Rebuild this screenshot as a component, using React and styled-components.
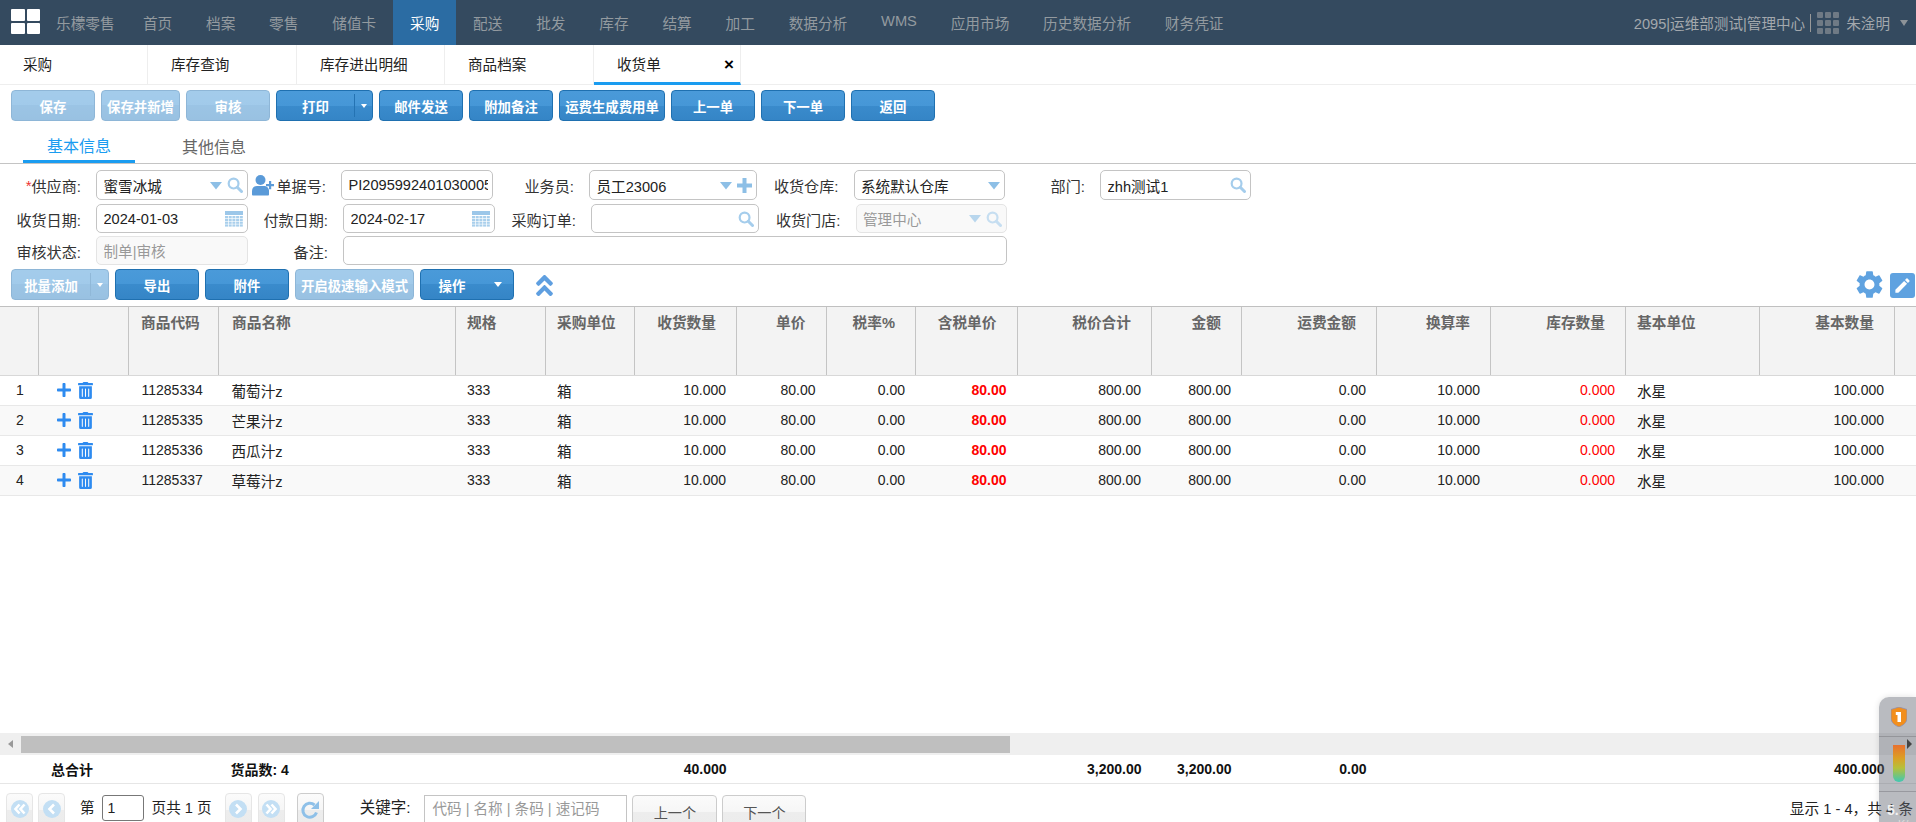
import React from "react";
import styled, { createGlobalStyle } from "styled-components";
import { FaPlus, FaTrashAlt, FaAngleDoubleUp } from "react-icons/fa";
import { MdSettings, MdEdit } from "react-icons/md";

const Global = createGlobalStyle`
  html, body { margin: 0; padding: 0; background: #fff; }
  body { font-family: "Liberation Sans", "Noto Sans CJK SC", sans-serif; color: #222; }
  * { box-sizing: border-box; }
`;

const Page = styled.div`
  position: relative; width: 1916px; height: 822px; overflow: hidden;
  display: flex; flex-direction: column; font-size: 14.6px;
`;
const Nav = styled.header`
  height: 45px; flex: none; background: #344a5f; display: flex; align-items: stretch;
  padding-left: 11px; color: #939a9f; font-size: 14.67px;
`;
const Logo = styled.div`
  width: 29px; height: 25px; margin-top: 9px; display: grid; grid-template-columns: 1fr 1fr;
  grid-template-rows: 1fr 1fr; gap: 2px; flex: none;
  span { background: #fff; border-radius: 1px; }
`;
const Brand = styled.div`
  margin-left: 16px; width: 70px; display: flex; align-items: center; white-space: nowrap;
`;
const NavItem = styled.div`
  display: flex; align-items: center; padding: 0 16.9px; white-space: nowrap;
  background: ${p => (p.$active ? "#2b6ca3" : "transparent")};
  color: ${p => (p.$active ? "#fff" : "#939a9f")};
  transform: ${p => (p.$latin ? "translateY(-2px)" : "none")};
`;
const NavRight = styled.div`
  margin-left: auto; display: flex; align-items: center; color: #a3a8ad; white-space: nowrap; padding-right: 8px; font-size: 14.6px;
`;
const NavSep = styled.i`
  width: 1px; height: 18px; background: #999; margin: 0 6px 0 5px;
`;
const Dots = styled.div`
  display: grid; grid-template-columns: repeat(3, 6px); grid-auto-rows: 6px; gap: 2px; margin-right: 7px;
  span { background: #6f7a85; border-radius: 1px; }
`;
const NavCaret = styled.i`
  width: 0; height: 0; margin-left: 10px; border: 4px solid transparent; border-top: 6px solid #8d9398; border-bottom: 0;
`;
const Tabs = styled.div`
  height: 40px; flex: none; display: flex; border-bottom: 1px solid #eee; color: #222;
`;
const Tab = styled.div`
  width: ${p => p.$w}px; display: flex; align-items: center; padding-left: 23px; padding-right: 6px; border-right: 1px solid #eee;
  justify-content: space-between; padding-bottom: 2px;
  ${p => p.$active && "border-bottom: 3px solid #1a9cf0; margin-bottom: -1px; padding-top: 1px;"}
`;
const Close = styled.span`
  font-size: 17px; font-weight: bold; color: #000; line-height: 1; padding-top: 3px;
`;
const Toolbar = styled.div`
  display: flex; gap: 6px; padding: 5px 0 0 11px; flex: none;
`;
const Btn = styled.div`
  height: 31px; width: ${p => p.$w}px; flex: none; border: 1px solid #1f70b0; border-radius: 4px;
  background: linear-gradient(#4a9ad9 0, #4697d7 50%, #3a8bcc 50%, #3585c6 100%);
  color: #fff; font-weight: bold; font-size: 13.4px; display: flex; align-items: center; justify-content: center;
  white-space: nowrap; overflow: hidden;
  opacity: ${p => (p.$off ? 0.5 : 1)};
`;
const BtnMain = styled.span`
  flex: 1; text-align: center;
`;
const BtnSide = styled.span`
  width: ${p => p.$w || 18}px; height: 100%; flex: none; display: flex; align-items: center; justify-content: center;
  ${p => p.$line && "border-left: 1px solid #2473b3; height: 80%;"}
`;
const WhiteCaret = styled.i`
  width: 0; height: 0; border: ${p => p.$s || 3}px solid transparent; border-top: ${p => (p.$s || 3) + 1}px solid #fff; border-bottom: 0;
`;
const SubTabs = styled.div`
  height: 43px; flex: none; display: flex; padding-left: 23px; gap: 23px; border-bottom: 1px solid #c4c4c4;
`;
const SubTab = styled.div`
  width: 112px; height: 42px; padding-top: 8px; display: flex; align-items: center; justify-content: center; font-size: 16px;
  color: ${p => (p.$active ? "#1a9cf0" : "#666")};
  border-bottom: ${p => (p.$active ? "3px solid #1a9cf0" : "0")};
`;
const Form = styled.div`
  padding-top: 6px; display: flex; flex-direction: column; flex: none;
`;
const FormRow = styled.div`
  display: flex; height: ${p => p.$h}px; margin-bottom: ${p => p.$mb}px;
`;
const Label = styled.label`
  width: ${p => p.$w}px; flex: none; padding-right: 15px; display: flex; align-items: center; justify-content: flex-end;
  white-space: nowrap; color: #333; font-size: 15.1px;
  em { color: #e33; font-style: normal; }
`;
const Field = styled.div`
  width: ${p => p.$w}px; flex: none; height: 100%; display: flex; align-items: center; gap: 5px;
  padding: 0 4px 0 6.5px; border-radius: 5px;
  border: 1px solid ${p => (p.$off ? "#e4e4e4" : "#c4c4c4")};
  background: ${p => (p.$off ? "#f9f9f9" : "#fff")};
  color: ${p => (p.$off ? "#999" : "#222")};
`;
const FieldText = styled.span`
  flex: 1; min-width: 0; overflow: hidden; white-space: nowrap;
`;
const IconBox = styled.span`
  display: inline-flex; flex: none; opacity: ${p => (p.$off ? 0.6 : 1)};
`;
const PersonBox = styled(IconBox)`
  margin-right: 3px;
`;
const ActionRow = styled.div`
  display: flex; align-items: flex-start; gap: 6px; padding-left: 11px; margin: 4px 0 6px; height: 31px; flex: none;
`;
const Chevrons = styled.span`
  margin-left: 11px; margin-top: 3px; color: #5f9fe0; font-size: 27px; line-height: 0; display: inline-flex;
`;
const Tools = styled.div`
  margin-left: auto; display: flex; align-items: center; gap: 4px; margin-right: 1px; height: 100%;
`;
const Edit = styled.span`
  width: 25px; height: 25px; border-radius: 3px; background: #5fa2e0; color: #fff; display: flex;
  align-items: center; justify-content: center; font-size: 19px; margin-top: 2px;
`;
const cols = "39px 89.5px 90px 237.5px 90px 89px 102px 89.5px 89.5px 101.5px 134.5px 90px 135px 114px 135px 134px 135px 21px";
const Head = styled.div`
  display: grid; grid-template-columns: ${cols}; height: 70px; flex: none; background: #f3f3f3;
  border-top: 1px solid #c0c0c0; border-bottom: 1px solid #d8d8d8;
`;
const HeadCell = styled.div`
  border-right: 1px solid #c4c4c4; padding: 7px ${p => (p.$r ? "20px" : "0")} 0 ${p => (p.$r ? "0" : p.$pl || 11)}px;
  text-align: ${p => (p.$r ? "right" : "left")}; color: #666; font-weight: bold; font-size: 14.7px;
  white-space: nowrap; line-height: 18px;
  &:last-child { border-right: 0; }
`;
const Body = styled.div`
  flex: 1; min-height: 0;
`;
const Row = styled.div`
  display: grid; grid-template-columns: ${cols}; height: 30px; border-bottom: 1px solid #e8e8e8;
  background: ${p => (p.$alt ? "#f9f9f9" : "#fff")};
`;
const Cell = styled.div`
  display: flex; align-items: center; white-space: nowrap; font-size: ${p => (p.$cjk ? "14.6px" : "14px")};
  justify-content: ${p => (p.$r ? "flex-end" : "flex-start")};
  padding: ${p => (p.$r ? "0 11px 1px 0" : `0 0 1px ${p.$pl || 11}px`)};
  color: ${p => p.$color || "#222"}; font-weight: ${p => (p.$bold ? "bold" : "normal")};
`;
const IndexCell = styled(Cell)`padding-left: 16px;`;
const OpCell = styled(Cell)`
  padding-left: 17px; gap: 5px; color: #2e8bf0;
`;
const Scroll = styled.div`
  height: 22px; flex: none; background: #efefef; display: flex; align-items: center; position: relative;
`;
const ScrollArrow = styled.i`
  width: 21px; display: flex; justify-content: center; flex: none;
  &::before { content: ""; border: 4px solid transparent; border-right: 5px solid #999; border-left: 0; }
`;
const Thumb = styled.div`
  width: 988.5px; height: 17px; background: #bfbfbf;
`;
const Total = styled.div`
  display: grid; grid-template-columns: ${cols}; height: 29px; flex: none; border-bottom: 1px solid #e6e6e6;
`;
const TotalCell = styled(Cell)`
  font-weight: bold; color: #111; overflow: visible;
  padding: ${p => (p.$r ? "0 10.5px 1px 0" : "0 0 1px 12px")};
`;
const Pager = styled.div`
  display: flex; align-items: flex-start; padding: 9px 3px 0 6px; flex: none; height: 38px; font-size: 14.6px; color: #222;
`;
const PageBtn = styled.div`
  width: ${p => p.$w || 27}px; height: 34px; margin-left: ${p => p.$ml || 0}px; margin-top: ${p => p.$mt || 0}px; flex: none;
  border: 1px solid #e6e6e6; border-radius: 4px;
  background: linear-gradient(#fbfbfb 0, #f6f6f6 50%, #ededed 50%, #ececec 100%); display: flex; align-items: flex-start;
  justify-content: center; padding-top: 6px; color: #555; font-size: 14.2px;
  ${p => p.$strong && "border-color: #ccc;"}
`;
const PagerText = styled.span`
  margin-left: ${p => p.$ml}px; line-height: 20px; padding-top: 5px; white-space: nowrap; font-size: ${p => p.$fs || 14.6}px;
`;
const PageNo = styled.div`
  width: 42px; height: 26px; margin-left: 7px; margin-top: 2px; flex: none; border: 1px solid #777; border-radius: 3px;
  padding: 2px 0 0 5px; line-height: 20px; font-size: 14px;
`;
const KeywordBox = styled.div`
  width: 203px; height: 30px; margin-left: 14px; margin-top: 2px; flex: none; border: 1px solid #c4c4c4;
  padding: 3px 0 0 7px; line-height: 20px; white-space: nowrap; color: #999;
`;
const PageInfo = styled.span`
  margin-left: auto; line-height: 20px; padding-top: 6px; white-space: nowrap; font-size: 14.7px;
`;
const Widget = styled.aside`
  position: absolute; left: 1879px; top: 697px; right: 0; bottom: 0; border-radius: 10px 0 0 0;
  background: rgba(100, 105, 115, 0.45); box-shadow: 0 0 6px rgba(0,0,0,.12);
  display: flex; flex-direction: column; align-items: flex-start;
`;
const ShieldSlot = styled.div`
  height: 40px; width: 100%; padding: 10px 0 0 12px; border-bottom: 1px solid rgba(120,120,125,.5); flex: none;
`;
const ThermoSlot = styled.div`
  position: relative; height: 55px; width: 100%; padding: 8px 0 0 14px; border-bottom: 1px solid rgba(120,120,125,.5); flex: none;
`;
const Thermo = styled.div`
  width: 12px; height: 37px; border-radius: 0 0 6px 6px;
  background: linear-gradient(#e8702f 0, #dc9f25 35%, #b6c03a 62%, #3ec8b4 100%);
`;
const ThermoArrow = styled.i`
  position: absolute; left: 28px; top: 2px; width: 0; height: 0; border: 5px solid transparent; border-left: 5px solid #444; border-right: 0;
`;
const Speed = styled.div`
  color: #f1f1f1; font-size: 14px; padding: 11px 0 0 8px; line-height: 15px; font-weight: bold; white-space: nowrap;
  small { display: block; font-size: 11px; font-weight: normal; color: #ddd; line-height: 12px; }
  small::before { content: "▲"; color: #2a8ee8; font-size: 8px; margin-right: 3px; }
`;

const CaretIcon = ({ c = "#8dbfe6" }) => (
  <svg width="12" height="9" viewBox="0 0 12 9"><path d="M0 1h12L6 8.500z" fill={c} /></svg>
);
const SearchIcon = ({ c = "#a5cdec" }) => (
  <svg width="16" height="16" viewBox="0 0 16 16" fill="none">
    <circle cx="6.600" cy="6.600" r="4.900" stroke={c} strokeWidth="2.200" />
    <path d="M10.300 10.300l4.200 4.200" stroke={c} strokeWidth="3" strokeLinecap="round" />
  </svg>
);
const PlusIcon = () => (
  <svg width="15" height="15" viewBox="0 0 15 15"><path d="M5.500 0h4v5.500H15v4H9.500V15h-4V9.500H0v-4h5.500z" fill="#8dbfe6" /></svg>
);
const CalIcon = () => (
  <svg width="18" height="16" viewBox="0 0 18 16">
    <rect width="18" height="4" fill="#9cc7e9" />
    {[0, 1, 2, 3].map(r => [0, 1, 2, 3, 4].map(c => (
      <rect key={r + "-" + c} x={c * 3.7} y={5 + r * 2.8} width="3" height="2.200" fill="#a9cfec" />
    )))}
  </svg>
);
const AddUser = () => (
  <svg width="22" height="22" viewBox="0 0 22 22" fill="#5a9ad8">
    <circle cx="8.500" cy="6" r="5" />
    <path d="M0 20.500v-3.500c0-3.500 2.500-5 5-5h7c2.500 0 5 1.500 5 5v3.500c0 .5-.5 1-1 1H1c-.5 0-1-.5-1-1z" />
    <path d="M17 7h2.200v3H22v2.200h-2.800v3H17v-3h-3V10h3z" />
  </svg>
);
const Cal = () => <IconBox><CalIcon /></IconBox>;
const Cue = ({ dir, dbl }) => {
  const pts = dir === "l"
    ? (dbl ? ["M8.500 4.500L4.500 9l4 4.500", "M13.500 4.500L9.500 9l4 4.500"] : ["M11 4.500L6.500 9l4.500 4.500"])
    : (dbl ? ["M4.500 4.500L8.500 9l-4 4.500", "M9.500 4.500L13.500 9l-4 4.500"] : ["M7 4.500L11.500 9 7 13.500"]);
  return (
    <svg width="18" height="18" viewBox="0 0 18 18">
      <circle cx="9" cy="9" r="9" fill="#c3dff4" />
      {pts.map(d => <path key={d} d={d} fill="none" stroke="#fff" strokeWidth="2.600" />)}
    </svg>
  );
};
const Refresh = () => (
  <svg width="20" height="20" viewBox="0 0 20 20" fill="none">
    <path d="M16.500 12.500A7 7 0 1 1 14.500 5" stroke="#8ec0e8" strokeWidth="3" />
    <path d="M19 1v8h-8z" fill="#8ec0e8" />
  </svg>
);
const Shield = () => (
  <svg width="16" height="20" viewBox="0 0 16 20">
    <path d="M8 0l8 2.500V11c0 4.500-4 7.500-8 9-4-1.500-8-4.500-8-9V2.500z" fill="#f28f1d" stroke="#8f8fb0" strokeWidth=".8" />
    <rect x="6.500" y="5" width="3.500" height="10" fill="#fff" />
    <path d="M4.800 5h3v3h-3z" fill="#fff" />
  </svg>
);

const navItems = ["首页", "档案", "零售", "储值卡", "采购", "配送", "批发", "库存", "结算", "加工", "数据分析", "WMS", "应用市场", "历史数据分析", "财务凭证"];
const heads = [
  ["", 0], ["", 0], ["商品代码", 0, 12.5], ["商品名称", 0, 13.5], ["规格", 0], ["采购单位", 0], ["收货数量", 1], ["单价", 1], ["税率%", 1], ["含税单价", 1],
  ["税价合计", 1], ["金额", 1], ["运费金额", 1], ["换算率", 1], ["库存数量", 1], ["基本单位", 0], ["基本数量", 1], ["", 0],
];
const rows = [
  ["11285334", "葡萄汁z"],
  ["11285335", "芒果汁z"],
  ["11285336", "西瓜汁z"],
  ["11285337", "草莓汁z"],
];

export default function App() {
  return (
    <Page>
      <Global />
      <Nav>
        <Logo><span /><span /><span /><span /></Logo>
        <Brand>乐檬零售</Brand>
        {navItems.map(n => <NavItem key={n} $active={n === "采购"} $latin={n === "WMS"}>{n}</NavItem>)}
        <NavRight>
          2095|运维部测试|管理中心<NavSep />
          <Dots>{Array.from({ length: 9 }, (_, i) => <span key={i} />)}</Dots>
          朱淦明<NavCaret />
        </NavRight>
      </Nav>
      <Tabs>
        <Tab $w={148}>采购</Tab>
        <Tab $w={149}>库存查询</Tab>
        <Tab $w={148}>库存进出明细</Tab>
        <Tab $w={149}>商品档案</Tab>
        <Tab $w={147} $active>收货单<Close>×</Close></Tab>
      </Tabs>
      <Toolbar>
        <Btn $w={84} $off>保存</Btn>
        <Btn $w={79} $off>保存并新增</Btn>
        <Btn $w={84} $off>审核</Btn>
        <Btn $w={97}><BtnMain>打印</BtnMain><BtnSide $line><WhiteCaret /></BtnSide></Btn>
        <Btn $w={84}>邮件发送</Btn>
        <Btn $w={84}>附加备注</Btn>
        <Btn $w={106}>运费生成费用单</Btn>
        <Btn $w={84}>上一单</Btn>
        <Btn $w={84}>下一单</Btn>
        <Btn $w={84}>返回</Btn>
      </Toolbar>
      <SubTabs>
        <SubTab $active>基本信息</SubTab>
        <SubTab>其他信息</SubTab>
      </SubTabs>
      <Form>
        <FormRow $h={30} $mb={4}>
          <Label $w={96}><em>*</em>供应商:</Label>
          <Field $w={152}><FieldText>蜜雪冰城</FieldText><IconBox><CaretIcon /></IconBox><IconBox><SearchIcon /></IconBox></Field>
          <Label $w={93}><PersonBox><AddUser /></PersonBox>单据号:</Label>
          <Field $w={152}><FieldText>PI2095992401030005</FieldText></Field>
          <Label $w={96}>业务员:</Label>
          <Field $w={168}><FieldText>员工23006</FieldText><IconBox><CaretIcon /></IconBox><IconBox><PlusIcon /></IconBox></Field>
          <Label $w={96.5}>收货仓库:</Label>
          <Field $w={151}><FieldText>系统默认仓库</FieldText><IconBox><CaretIcon /></IconBox></Field>
          <Label $w={95.5}>部门:</Label>
          <Field $w={151}><FieldText>zhh测试1</FieldText><IconBox><SearchIcon /></IconBox></Field>
        </FormRow>
        <FormRow $h={29} $mb={3}>
          <Label $w={96}>收货日期:</Label>
          <Field $w={152}><FieldText>2024-01-03</FieldText><Cal /></Field>
          <Label $w={95}>付款日期:</Label>
          <Field $w={152}><FieldText>2024-02-17</FieldText><Cal /></Field>
          <Label $w={96}>采购订单:</Label>
          <Field $w={168}><FieldText /><IconBox><SearchIcon /></IconBox></Field>
          <Label $w={96.5}>收货门店:</Label>
          <Field $w={151} $off><FieldText>管理中心</FieldText><IconBox $off><CaretIcon /></IconBox><IconBox $off><SearchIcon /></IconBox></Field>
        </FormRow>
        <FormRow $h={29} $mb={0}>
          <Label $w={96}>审核状态:</Label>
          <Field $w={152} $off><FieldText>制单|审核</FieldText></Field>
          <Label $w={95}>备注:</Label>
          <Field $w={663.5}><FieldText /></Field>
        </FormRow>
      </Form>
      <ActionRow>
        <Btn $w={98} $off><BtnMain>批量添加</BtnMain><BtnSide $line><WhiteCaret /></BtnSide></Btn>
        <Btn $w={84}>导出</Btn>
        <Btn $w={84}>附件</Btn>
        <Btn $w={119} $off>开启极速输入模式</Btn>
        <Btn $w={94}><BtnMain>操作</BtnMain><BtnSide $w={30}><WhiteCaret $s={4} /></BtnSide></Btn>
        <Chevrons><FaAngleDoubleUp /></Chevrons>
        <Tools>
          <MdSettings size={33} color="#5fa2e0" />
          <Edit><MdEdit /></Edit>
        </Tools>
      </ActionRow>
      <Head>
        {heads.map(([t, r, pl], i) => <HeadCell key={i} $r={!!r} $pl={pl}>{t}</HeadCell>)}
      </Head>
      <Body>
        {rows.map(([code, name], i) => (
          <Row key={code} $alt={i % 2 === 1}>
            <IndexCell>{i + 1}</IndexCell>
            <OpCell><FaPlus size={16} /><FaTrashAlt size={17} /></OpCell>
            <Cell $pl={13}>{code}</Cell>
            <Cell $cjk $pl={13}>{name}</Cell>
            <Cell>333</Cell>
            <Cell $cjk>箱</Cell>
            <Cell $r>10.000</Cell>
            <Cell $r>80.00</Cell>
            <Cell $r>0.00</Cell>
            <Cell $r $color="#f00" $bold>80.00</Cell>
            <Cell $r>800.00</Cell>
            <Cell $r>800.00</Cell>
            <Cell $r>0.00</Cell>
            <Cell $r>10.000</Cell>
            <Cell $r $color="#f00">0.000</Cell>
            <Cell $cjk>水星</Cell>
            <Cell $r>100.000</Cell>
            <Cell />
          </Row>
        ))}
      </Body>
      <Scroll>
        <ScrollArrow />
        <Thumb />
      </Scroll>
      <Total>
        <TotalCell />
        <TotalCell>总合计</TotalCell>
        <TotalCell />
        <TotalCell>货品数: 4</TotalCell>
        <TotalCell /><TotalCell />
        <TotalCell $r>40.000</TotalCell>
        <TotalCell /><TotalCell /><TotalCell />
        <TotalCell $r>3,200.00</TotalCell>
        <TotalCell $r>3,200.00</TotalCell>
        <TotalCell $r>0.00</TotalCell>
        <TotalCell /><TotalCell /><TotalCell />
        <TotalCell $r>400.000</TotalCell>
        <TotalCell />
      </Total>
      <Pager>
        <PageBtn><Cue dir="l" dbl /></PageBtn>
        <PageBtn $ml={5}><Cue dir="l" /></PageBtn>
        <PagerText $ml={15}>第</PagerText>
        <PageNo>1</PageNo>
        <PagerText $ml={8}>页共 1 页</PagerText>
        <PageBtn $ml={13}><Cue dir="r" /></PageBtn>
        <PageBtn $ml={6}><Cue dir="r" dbl /></PageBtn>
        <PageBtn $ml={12} $strong><Refresh /></PageBtn>
        <PagerText $ml={36} $fs={15.5}>关键字:</PagerText>
        <KeywordBox>代码 | 名称 | 条码 | 速记码</KeywordBox>
        <PageBtn $w={85} $ml={5} $mt={2} $strong>上一个</PageBtn>
        <PageBtn $w={84} $ml={5} $mt={2} $strong>下一个</PageBtn>
        <PageInfo>显示 1 - 4，共 4 条</PageInfo>
      </Pager>
      <Widget>
        <ShieldSlot><Shield /></ShieldSlot>
        <ThermoSlot><Thermo /><ThermoArrow /></ThermoSlot>
        <Speed>5.<small>K/s</small></Speed>
      </Widget>
    </Page>
  );
}
